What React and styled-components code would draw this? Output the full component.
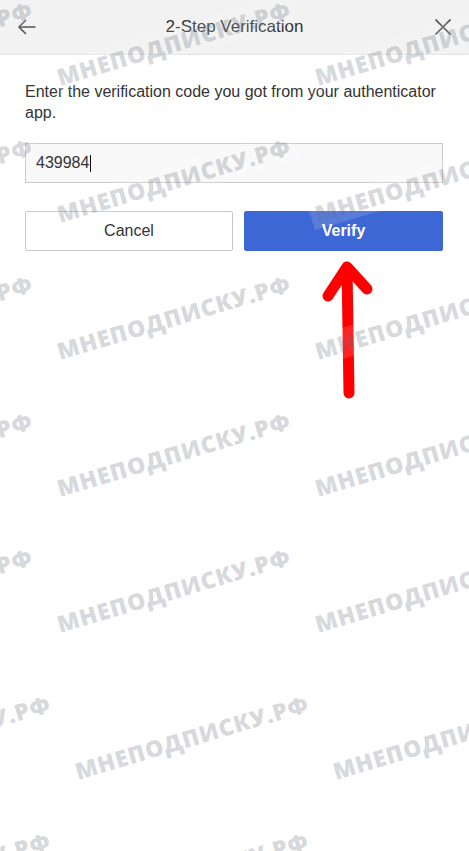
import React from "react";
import styled, { createGlobalStyle } from "styled-components";

const GlobalStyle = createGlobalStyle`
  html, body {
    margin: 0;
    padding: 0;
    background: #fff;
  }
  body {
    font-family: "Liberation Sans", Arial, sans-serif;
    color: #333;
  }
`;

const Screen = styled.div`
  position: relative;
  width: 469px;
  height: 851px;
  overflow: hidden;
  background: #fff;
`;

const Header = styled.header`
  display: grid;
  grid-template-columns: 1fr auto 1fr;
  align-items: center;
  height: 54px;
  padding: 0 18px;
  background: #f2f2f2;
  border-bottom: 1px solid #e3e3e3;
`;

const Title = styled.h1`
  margin: 0;
  font-size: 17px;
  font-weight: 400;
  color: #333;
`;

const IconButton = styled.button`
  display: flex;
  align-items: center;
  justify-self: ${p => (p.$end ? "end" : "start")};
  padding: 0;
  border: 0;
  background: none;
  color: #555;
  cursor: pointer;
`;

const Content = styled.main`
  padding: 26px 26px 0 25px;
`;

const Prompt = styled.p`
  margin: 0;
  font-size: 16px;
  line-height: 21px;
  color: #333;
`;

const Field = styled.div`
  display: flex;
  align-items: center;
  box-sizing: border-box;
  height: 40px;
  margin-top: 20px;
  padding: 0 10px;
  border: 1px solid #cacaca;
  background: #f8f8f8;
  font-size: 16px;
  color: #333;
`;

const Caret = styled.span`
  display: inline-block;
  width: 1px;
  height: 17px;
  margin-left: 1px;
  background: #111;
`;

const Actions = styled.div`
  display: grid;
  grid-template-columns: 208px 1fr;
  gap: 11px;
  margin-top: 28px;
`;

const Button = styled.button`
  height: 40px;
  border-radius: 2px;
  font-family: "Liberation Sans", Arial, sans-serif;
  font-size: 16px;
  cursor: pointer;
  border: 1px solid ${p => (p.$primary ? "#3e67d6" : "#c8c8c8")};
  background: ${p => (p.$primary ? "#3e67d6" : "#fff")};
  color: ${p => (p.$primary ? "#fff" : "#333")};
  font-weight: ${p => (p.$primary ? 700 : 400)};
`;

const Annotation = styled.svg`
  position: absolute;
  left: 318px;
  top: 255px;
  width: 60px;
  height: 150px;
  overflow: visible;
`;

const Watermarks = styled.div`
  position: absolute;
  inset: 0;
  overflow: hidden;
  pointer-events: none;
`;

const Mark = styled.span.attrs(p => ({
  style: { left: p.$x - 5, top: p.$y - 24 },
}))`
  position: absolute;
  padding: 2px 5px;
  white-space: nowrap;
  font-family: "Open Sans", sans-serif;
  font-weight: 800;
  font-size: 23px;
  line-height: 26px;
  letter-spacing: 0.8px;
  color: rgba(95, 105, 118, 0.27);
  background: rgba(255, 255, 255, 0.14);
  transform: rotate(-16.5deg);
  transform-origin: 5px 24px;
`;

// rows of the tiled watermark: baseline y and horizontal shift
let rows = [
  [86, 0],
  [223, 0],
  [360, 0],
  [497, 0],
  [633, 0],
  [780, 18],
  [917, 18],
];
let columns = [-198, 60, 318];

function App() {
  return (
    <Screen>
      <GlobalStyle />
      <Header>
        <IconButton aria-label="Back">
          <svg width="18" height="16" viewBox="0 0 18 16" fill="none">
            <path
              d="M17.5 8H1M8 1 1 8l7 7"
              stroke="currentColor"
              strokeWidth="1.6"
            />
          </svg>
        </IconButton>
        <Title>2-Step Verification</Title>
        <IconButton $end aria-label="Close">
          <svg width="16" height="16" viewBox="0 0 16 16" fill="none">
            <path
              d="M0.5 0.5l15 15M15.5 0.5l-15 15"
              stroke="currentColor"
              strokeWidth="1.6"
            />
          </svg>
        </IconButton>
      </Header>
      <Content>
        <Prompt>
          Enter the verification code you got from your authenticator app.
        </Prompt>
        <Field>
          439984
          <Caret />
        </Field>
        <Actions>
          <Button>Cancel</Button>
          <Button $primary>Verify</Button>
        </Actions>
      </Content>
      <Annotation viewBox="0 0 60 150">
        <path
          d="M31 138 29 12M10 41 29 12 49 34"
          stroke="#ff0000"
          strokeWidth="11"
          strokeLinecap="round"
          strokeLinejoin="round"
          fill="none"
        />
      </Annotation>
      <Watermarks>
        {rows.map(([y, shift]) =>
          columns.map(x => (
            <Mark key={`${y}-${x}`} $x={x + shift} $y={y}>
              МНЕПОДПИСКУ.РФ
            </Mark>
          ))
        )}
      </Watermarks>
    </Screen>
  );
}

export default App;
